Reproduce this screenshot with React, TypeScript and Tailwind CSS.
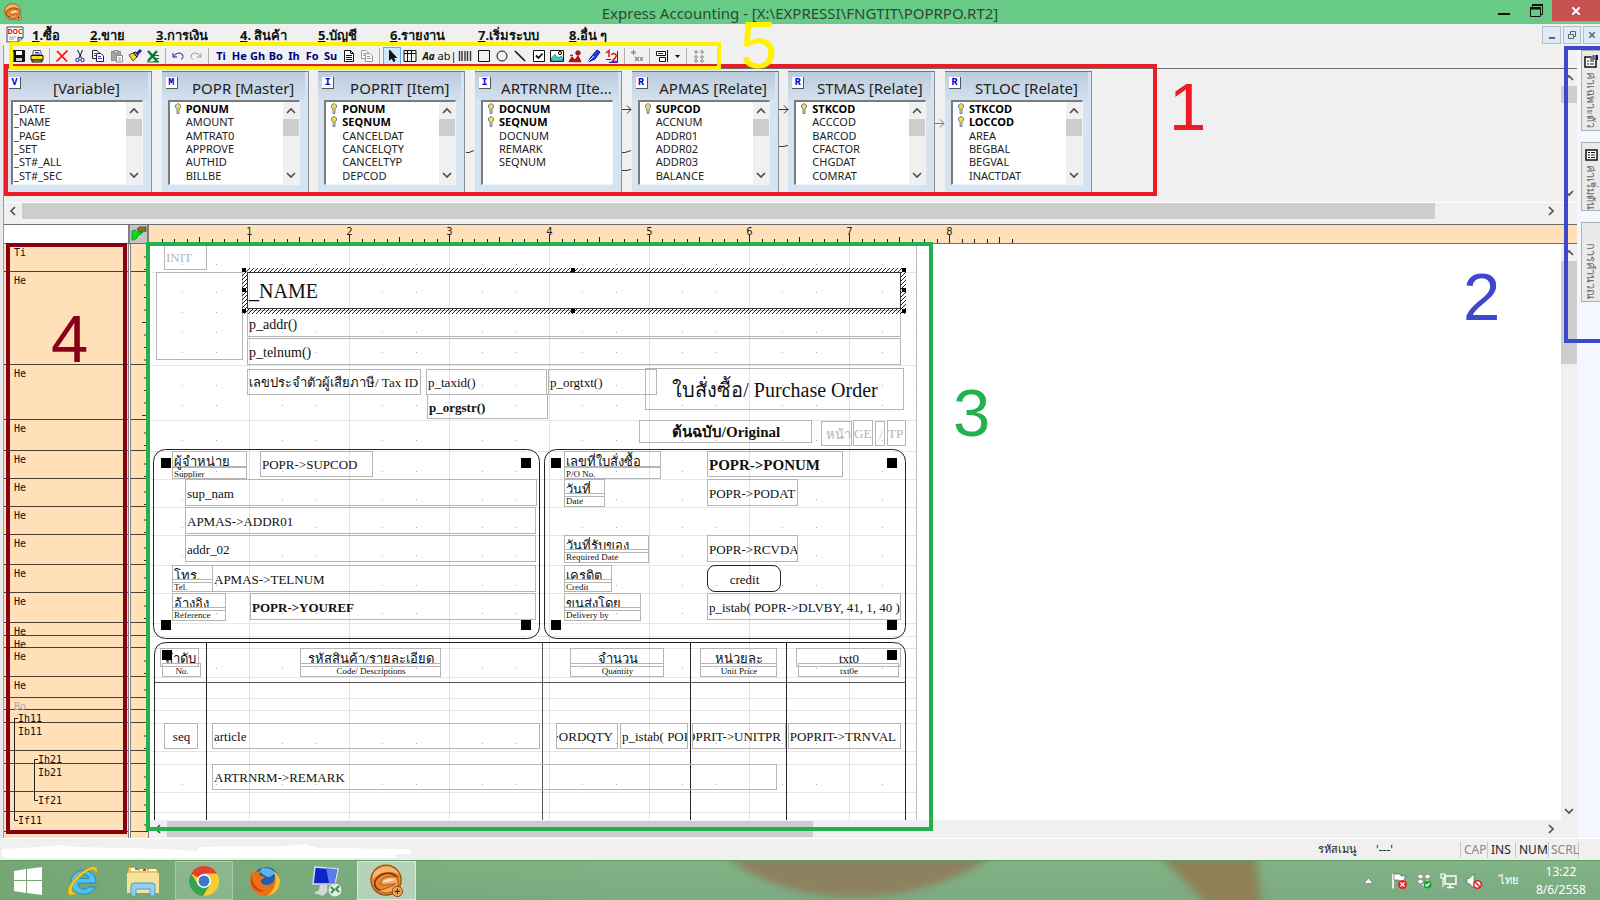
import type { ReactNode } from 'react';
import clsx from 'clsx';

interface FieldWindow {
  badge: string;
  title: string;
  keys: string[];
  fields: string[];
  scroll: boolean;
}

interface ReportField {
  x: number;
  y: number;
  w: number;
  h: number;
  text: string;
  className?: string;
}

const menus = [
  { key: '1', label: '.ซื้อ', width: 'w-[58px]' },
  { key: '2', label: '.ขาย', width: 'w-[66px]' },
  { key: '3', label: '.การเงิน', width: 'w-[84px]' },
  { key: '4', label: '. สินค้า', width: 'w-[78px]' },
  { key: '5', label: '.บัญชี', width: 'w-[72px]' },
  { key: '6', label: '.รายงาน', width: 'w-[88px]' },
  { key: '7', label: '.เริ่มระบบ', width: 'w-[91px]' },
  { key: '8', label: '.อื่น ๆ', width: 'w-[60px]' },
];

const fieldWindows: FieldWindow[] = [
  { badge: 'V', title: '[Variable]', keys: [], fields: ['_DATE', '_NAME', '_PAGE', '_SET', '_ST#_ALL', '_ST#_SEC'], scroll: true },
  { badge: 'M', title: 'POPR [Master]', keys: ['PONUM'], fields: ['AMOUNT', 'AMTRAT0', 'APPROVE', 'AUTHID', 'BILLBE'], scroll: true },
  { badge: 'I', title: 'POPRIT [Item]', keys: ['PONUM', 'SEQNUM'], fields: ['CANCELDAT', 'CANCELQTY', 'CANCELTYP', 'DEPCOD'], scroll: true },
  { badge: 'I', title: 'ARTRNRM [Ite...', keys: ['DOCNUM', 'SEQNUM'], fields: ['DOCNUM', 'REMARK', 'SEQNUM'], scroll: false },
  { badge: 'R', title: 'APMAS [Relate]', keys: ['SUPCOD'], fields: ['ACCNUM', 'ADDR01', 'ADDR02', 'ADDR03', 'BALANCE'], scroll: true },
  { badge: 'R', title: 'STMAS [Relate]', keys: ['STKCOD'], fields: ['ACCCOD', 'BARCOD', 'CFACTOR', 'CHGDAT', 'COMRAT'], scroll: true },
  { badge: 'R', title: 'STLOC [Relate]', keys: ['STKCOD', 'LOCCOD'], fields: ['AREA', 'BEGBAL', 'BEGVAL', 'INACTDAT'], scroll: true },
];

// Report sections, heights are in screen pixels
const sections = [
  { name: 'Ti', h: 28 },
  { name: 'He', h: 93 },
  { name: 'He', h: 55 },
  { name: 'He', h: 31 },
  { name: 'He', h: 28 },
  { name: 'He', h: 28 },
  { name: 'He', h: 28 },
  { name: 'He', h: 30 },
  { name: 'He', h: 28 },
  { name: 'He', h: 30 },
  { name: 'He', h: 13 },
  { name: 'He', h: 12 },
  { name: 'He', h: 29 },
  { name: 'He', h: 21 },
  { name: 'Bo', h: 12, className: 'text-[#a9a9a9]' },
  { name: 'Ih11', h: 13, className: 'pl-[14px]' },
  { name: 'Ib11', h: 28, className: 'pl-[14px]' },
  { name: 'Ih21', h: 13, className: 'pl-[34px]' },
  { name: 'Ib21', h: 28, className: 'pl-[34px]' },
  { name: 'If21', h: 20, className: 'pl-[34px]' },
  { name: 'If11', h: 20, className: 'pl-[14px]' },
];

const thaiLabel = 'items-start !overflow-visible text-[13px] leading-[15px]';
const engLabel = 'text-[9px] leading-[10px]';
const mid = 'justify-center';

const reportFields: ReportField[] = [
  { x: 15, y: 0, w: 43, h: 26, text: 'INIT', className: 'text-[#b4b4b4]' },
  { x: 7, y: 28, w: 87, h: 88, text: '' },
  { x: 98, y: 66, w: 654, h: 27, text: 'p_addr()', className: 'text-sm' },
  { x: 98, y: 94, w: 654, h: 27, text: 'p_telnum()', className: 'text-sm' },
  { x: 98, y: 125, w: 174, h: 26, text: 'เลขประจำตัวผู้เสียภาษี/ Tax ID' },
  { x: 277, y: 125, w: 121, h: 26, text: 'p_taxid()' },
  { x: 278, y: 150, w: 121, h: 25, text: 'p_orgstr()', className: 'font-bold' },
  { x: 399, y: 125, w: 109, h: 26, text: 'p_orgtxt()' },
  { x: 496, y: 124, w: 259, h: 42, text: 'ใบสั่งซื้อ/ Purchase Order', className: 'justify-center text-xl' },
  { x: 490, y: 176, w: 173, h: 23, text: 'ต้นฉบับ/Original', className: 'justify-center text-[15px] font-bold' },
  { x: 672, y: 177, w: 31, h: 25, text: 'หน้า', className: '!pl-[4px] text-[#b4b4b4]' },
  { x: 704, y: 176, w: 20, h: 26, text: 'GE', className: '!pl-0 text-[#b4b4b4]' },
  { x: 726, y: 177, w: 10, h: 25, text: '/', className: '!pl-[3px] text-[#b4b4b4]' },
  { x: 738, y: 176, w: 19, h: 26, text: 'TP', className: '!pl-0 text-[#b4b4b4]' },

  { x: 23, y: 207, w: 75, h: 17, text: 'ผู้จำหน่าย', className: thaiLabel },
  { x: 23, y: 222, w: 75, h: 13, text: 'Supplier', className: engLabel },
  { x: 111, y: 207, w: 113, h: 26, text: 'POPR->SUPCOD' },
  { x: 36, y: 235, w: 352, h: 27, text: 'sup_nam' },
  { x: 36, y: 263, w: 351, h: 27, text: 'APMAS->ADDR01' },
  { x: 36, y: 291, w: 351, h: 27, text: 'addr_02' },
  { x: 23, y: 321, w: 41, h: 18, text: 'โทร.', className: thaiLabel },
  { x: 23, y: 335, w: 41, h: 13, text: 'Tel.', className: engLabel },
  { x: 63, y: 321, w: 324, h: 27, text: 'APMAS->TELNUM' },
  { x: 23, y: 349, w: 54, h: 18, text: 'อ้างอิง', className: thaiLabel },
  { x: 23, y: 363, w: 54, h: 14, text: 'Reference', className: engLabel },
  { x: 101, y: 349, w: 286, h: 27, text: 'POPR->YOUREF', className: 'font-bold' },

  { x: 415, y: 207, w: 97, h: 17, text: 'เลขที่ใบสั่งซื้อ', className: thaiLabel },
  { x: 415, y: 222, w: 97, h: 13, text: 'P/O No.', className: engLabel },
  { x: 558, y: 207, w: 136, h: 26, text: 'POPR->PONUM', className: 'text-[15px] font-bold' },
  { x: 415, y: 235, w: 41, h: 18, text: 'วันที่', className: thaiLabel },
  { x: 415, y: 249, w: 41, h: 14, text: 'Date', className: engLabel },
  { x: 558, y: 235, w: 91, h: 27, text: 'POPR->PODAT' },
  { x: 415, y: 291, w: 85, h: 18, text: 'วันที่รับของ', className: thaiLabel },
  { x: 415, y: 305, w: 85, h: 14, text: 'Required Date', className: engLabel },
  { x: 558, y: 291, w: 91, h: 27, text: 'POPR->RCVDAT' },
  { x: 415, y: 321, w: 48, h: 18, text: 'เครดิต', className: thaiLabel },
  { x: 415, y: 335, w: 48, h: 13, text: 'Credit', className: engLabel },
  { x: 558, y: 321, w: 74, h: 27, text: 'credit', className: 'justify-center rounded-lg !border-[#222]' },
  { x: 415, y: 349, w: 77, h: 18, text: 'ขนส่งโดย', className: thaiLabel },
  { x: 415, y: 363, w: 77, h: 14, text: 'Delivery by', className: engLabel },
  { x: 558, y: 349, w: 194, h: 27, text: 'p_istab( POPR->DLVBY, 41, 1, 40 )' },

  { x: 11, y: 404, w: 39, h: 19, text: 'ลำดับ', className: clsx(thaiLabel, mid) },
  { x: 13, y: 419, w: 39, h: 14, text: 'No.', className: clsx(engLabel, mid) },
  { x: 151, y: 404, w: 141, h: 19, text: 'รหัสสินค้า/รายละเอียด', className: clsx(thaiLabel, mid) },
  { x: 151, y: 419, w: 141, h: 14, text: 'Code/ Descriptions', className: clsx(engLabel, mid) },
  { x: 421, y: 404, w: 94, h: 19, text: 'จำนวน', className: clsx(thaiLabel, mid) },
  { x: 421, y: 419, w: 94, h: 14, text: 'Quantity', className: clsx(engLabel, mid) },
  { x: 551, y: 404, w: 77, h: 19, text: 'หน่วยละ', className: clsx(thaiLabel, mid) },
  { x: 551, y: 419, w: 77, h: 14, text: 'Unit Price', className: clsx(engLabel, mid) },
  { x: 647, y: 404, w: 105, h: 19, text: 'txt0', className: clsx(thaiLabel, mid) },
  { x: 649, y: 419, w: 101, h: 14, text: 'txt0e', className: clsx(engLabel, mid) },

  { x: 15, y: 479, w: 34, h: 26, text: 'seq', className: mid },
  { x: 63, y: 479, w: 328, h: 26, text: 'article' },
  { x: 407, y: 479, w: 62, h: 26, text: 'POPRIT->ORDQTY', className: 'justify-end pr-[4px]' },
  { x: 471, y: 479, w: 68, h: 26, text: 'p_istab( POPRIT->TQUCOD' },
  { x: 543, y: 479, w: 94, h: 26, text: 'POPRIT->UNITPR', className: 'justify-end pr-[4px]' },
  { x: 639, y: 479, w: 113, h: 26, text: 'POPRIT->TRNVAL', className: 'justify-end pr-[4px]' },
  { x: 63, y: 520, w: 565, h: 26, text: 'ARTRNRM->REMARK' },
];

const panelHandles = [
  [12, 214], [372, 214], [12, 376], [372, 376],
  [402, 214], [738, 214], [402, 376], [738, 376],
  [13, 406], [738, 406],
];

function Chevron({ dir }: { dir: 'up' | 'down' | 'left' | 'right' }) {
  const paths = { up: 'M1 7L5 3L9 7', down: 'M1 3L5 7L9 3', left: 'M7 1L3 5L7 9', right: 'M3 1L7 5L3 9' };
  return (
    <svg viewBox="0 0 10 10" className="size-[10px]">
      <path d={paths[dir]} fill="none" stroke="#505050" strokeWidth="1.7" />
    </svg>
  );
}

function VScroll({ thumb, className }: { thumb: string; className?: string }) {
  return (
    <div className={clsx('flex w-4 shrink-0 flex-col bg-[#f0f0f0]', className)}>
      <button aria-label="Scroll up" className="flex h-[17px] items-center justify-center"><Chevron dir="up" /></button>
      <div className="flex-1"><div className={clsx('bg-[#cdcdcd]', thumb)} /></div>
      <button aria-label="Scroll down" className="flex h-[18px] items-center justify-center"><Chevron dir="down" /></button>
    </div>
  );
}

function HScroll({ thumb }: { thumb: string }) {
  return (
    <div className="flex h-4 min-w-0 flex-1 bg-[#f0f0f0]">
      <button aria-label="Scroll left" className="flex w-[18px] items-center justify-center"><Chevron dir="left" /></button>
      <div className="flex-1"><div className={clsx('h-full bg-[#cdcdcd]', thumb)} /></div>
      <button aria-label="Scroll right" className="flex w-5 items-center justify-center"><Chevron dir="right" /></button>
    </div>
  );
}

function ExpressIcon({ className }: { className: string }) {
  return (
    <svg viewBox="0 0 36 36" className={className}>
      <circle cx="17" cy="17" r="16" fill="#e9862b" stroke="#8a4a12" strokeWidth="1.2" />
      <path d="M3 12C8 0 26 0 31 11C22 6 11 8 3 16Z" fill="#f8b470" />
      <path d="M29 14C22 7 9 9 5 19C4 23 7 27 11 28" fill="none" stroke="#6b2f08" strokeWidth="1.5" />
      <path d="M29 14C20 12 12 14 11 21C15 24 22 21 27 21C22 25 15 26 10 28C15 33 26 31 30 23Z" fill="#f6a65a" stroke="#8a4411" strokeWidth=".8" />
      <path d="M13 19C17 15 23 15 27 17C22 18 18 20 13 19Z" fill="#fde0bd" />
      <circle cx="29" cy="29" r="5.5" fill="#f2a455" stroke="#7a3d0c" />
      <path d="M29 26V32M26 29H32" stroke="#5b2a08" strokeWidth="1.2" />
    </svg>
  );
}

function Tool({ label, active, children }: { label: string; active?: boolean; children: ReactNode }) {
  return (
    <button
      aria-label={label}
      className={clsx('flex h-[18px] w-[18px] items-center justify-center', active && 'border border-[#66a7e8] bg-[#cce8ff]')}
    >
      {children}
    </button>
  );
}

function Icon({ children }: { children: ReactNode }) {
  return <svg viewBox="0 0 14 14" className="size-[14px] shrink-0" fill="none" stroke="#111" strokeWidth="1">{children}</svg>;
}

function PageLines({ color }: { color: string }) {
  return (
    <g stroke={color}>
      <path d="M2.5 1.5H8.5L11.5 4.5V12.5H2.5Z" fill="#fff" />
      <path d="M8.5 1.5V4.5H11.5M4 6.5H10M4 8.5H10M4 10.5H10" />
    </g>
  );
}

function CopyPages({ ink, line }: { ink: string; line: string }) {
  return (
    <g stroke={ink}>
      <path d="M1.5 1.5H6L8.5 4V9.5H1.5Z" fill="#fff" />
      <path d="M5.5 4.5H10L12.5 7V12.5H5.5Z" fill="#fff" />
      <path d="M3 4.5H5M3 6.5H5M7 7.5H10M7 9.5H11" stroke={line} />
    </g>
  );
}

function Separator() {
  return <div className="mx-[3px] h-4 w-px shrink-0 bg-[#b0b0b0]" />;
}

function Toolbar() {
  return (
    <div className="flex h-[23px] shrink-0 items-center bg-[#f1f1f1] pb-px pl-[6px]">
      <div className="flex w-9 justify-between">
        <Tool label="Save">
          <Icon>
            <path d="M1.5 1.5H12.5V12.5H1.5Z" fill="#111" />
            <path d="M4 2H10V6H4Z" fill="#fff" stroke="none" />
            <path d="M4 9H10V12H4Z" fill="#cfcfcf" stroke="none" />
            <path d="M1.5 3V12" stroke="#8a8a00" />
          </Icon>
        </Tool>
        <Tool label="Print">
          <Icon>
            <path d="M3.5 1.5H10.5L11.5 6H2.5Z" fill="#fff" stroke="#555" />
            <path d="M5 3.5H9M5 5H10" stroke="#44c" />
            <path d="M1 6.5H13V11H1Z" fill="#f3df1a" />
            <path d="M2 11H12V13H2Z" fill="#e8c800" />
          </Icon>
        </Tool>
      </div>
      <Separator />
      <div className="flex w-[109px] justify-between">
        <Tool label="Delete"><Icon><path d="M2 2L12 12.5M12.5 1.5L1.5 12.5" stroke="#f00" strokeWidth="1.6" /></Icon></Tool>
        <Tool label="Cut">
          <Icon>
            <path d="M4.5 1L8.5 9M9.5 1L6 9" />
            <circle cx="4.5" cy="11" r="1.7" stroke="#11a" />
            <circle cx="9.5" cy="11" r="1.7" stroke="#11a" />
          </Icon>
        </Tool>
        <Tool label="Copy"><Icon><CopyPages ink="#223" line="#33c" /></Icon></Tool>
        <Tool label="Paste">
          <Icon>
            <path d="M1.5 2.5H10.5V11.5H1.5Z" fill="#a5a5a5" stroke="#888" />
            <path d="M4 1.5H8V4H4Z" fill="#ddd" stroke="#888" />
            <path d="M6.5 6.5H12.5V13H6.5Z" fill="#fff" stroke="#888" />
            <path d="M8 9H11M8 11H11" stroke="#999" />
          </Icon>
        </Tool>
        <Tool label="Format brush">
          <Icon>
            <path d="M1 6L5 4L9 8L5 12Z" fill="#f5e11c" stroke="#553" />
            <path d="M5 4L8 3L10 6L9 8Z" fill="#999" />
            <path d="M9 5L13 1" stroke="#22a" strokeWidth="3" />
          </Icon>
        </Tool>
        <Tool label="Export">
          <Icon>
            <path d="M2 2L11 12M11 2L2 12" stroke="#0a7a2a" strokeWidth="2.5" />
            <path d="M8 6.5H13M8 9.5H13M8 12.5H13M1 13H13" stroke="#0a7a2a" />
          </Icon>
        </Tool>
      </div>
      <Separator />
      <div className="flex w-9 justify-between">
        <Tool label="Undo"><Icon><path d="M2 4V8H6M2.5 7.5C5 3 12 3 12 7.5C12 9 11 10 10 10.5" stroke="#118" /></Icon></Tool>
        <Tool label="Redo"><Icon><path d="M12 4V8H8M11.5 7.5C9 3 2 3 2 7.5C2 9 3 10 4 10.5" stroke="#999" /></Icon></Tool>
      </div>
      <Separator />
      <div className="flex w-[164px] justify-between text-[11px] font-bold text-[#00007b]">
        {['Ti', 'He', 'Gh', 'Bo', 'Ih', 'Fo', 'Su'].map((name) => (
          <Tool key={name} label={`Section ${name}`}>{name}</Tool>
        ))}
        <Tool label="Page"><Icon><PageLines color="#111" /></Icon></Tool>
        <Tool label="Pages"><Icon><CopyPages ink="#999" line="#999" /></Icon></Tool>
      </div>
      <Separator />
      <div className="flex w-[238px] justify-between">
        <Tool label="Pointer" active><Icon><path d="M4.5 1V11L7 9L8.5 12.5L10 12L8.5 8.5H11.5Z" fill="#111" /></Icon></Tool>
        <Tool label="Grid"><Icon><path d="M1 1.5H13V12.5H1ZM4.5 1.5V12.5M8.5 1.5V12.5M1 4.5H13" /></Icon></Tool>
        <Tool label="Text"><span className="text-[10px] font-bold italic">Aa</span></Tool>
        <Tool label="Edit box"><span className="text-[11px]">ab|</span></Tool>
        <Tool label="Barcode"><Icon><path d="M1.5 2V12M4 2V12M7 2V12M9.5 2V12M12.5 2V12" stroke="#333" strokeWidth="1.4" /></Icon></Tool>
        <Tool label="Rectangle"><Icon><path d="M1.5 1.5H12.5V12.5H1.5Z" /></Icon></Tool>
        <Tool label="Ellipse"><Icon><circle cx="7" cy="7" r="5" /></Icon></Tool>
        <Tool label="Line"><Icon><path d="M2 2L12 12" strokeWidth="1.6" /></Icon></Tool>
        <Tool label="Check box"><Icon><path d="M1.5 1.5H12.5V12.5H1.5Z" fill="#fff" /><path d="M4 6.5L6.5 9L10.5 4.5" strokeWidth="1.8" /></Icon></Tool>
        <Tool label="Picture">
          <Icon>
            <path d="M.5 1.5H13.5V12.5H.5Z" fill="#fff" />
            <path d="M1.500 9L5 5.500L8 9L11 7L12.500 9V12H1.500Z" fill="#3fd0cc" stroke="#167" strokeWidth=".7" />
            <circle cx="10" cy="4" r="1.6" fill="#f5e11c" />
          </Icon>
        </Tool>
        <Tool label="Field picture">
          <Icon>
            <path d="M1 12.5L4 8L7 11L10 7L13 12.5Z" fill="#b91414" stroke="#811" />
            <circle cx="10" cy="4" r="2.2" fill="#c11" stroke="#811" />
            <path d="M2 6.5H5M1 12.5H13" stroke="#b11" strokeWidth="1.5" />
          </Icon>
        </Tool>
        <Tool label="Pen"><Icon><path d="M1 13L4 8L10 1L13 3L8 10Z" fill="#1f3fe0" stroke="#118" /><path d="M1 13L7 7" stroke="#fff" /></Icon></Tool>
        <Tool label="Number">
          <Icon>
            <path d="M1 4L4 1.5V8M6.5 6C8 3 13 5 10.5 8.5L7 12.5H12" stroke="#e01515" strokeWidth="1.5" />
            <path d="M1 10.5H6M12.5 2V13.5H4" stroke="#22c" />
          </Icon>
        </Tool>
      </div>
      <Separator />
      <Tool label="Formula"><Icon><path d="M1 3.5H6M3.5 1V6M5 8L9 12M9 8L5 12M10 9H13M10 11H13" stroke="#888" strokeWidth="1.3" /></Icon></Tool>
      <Separator />
      <Tool label="Align"><Icon><path d="M1.5 2.5H10.5V6.5H1.5ZM4.5 8.5H10.5V12.5H4.5ZM12.5 1V13" fill="#fff" /><path d="M3 4.5H8" stroke="#22c" /></Icon></Tool>
      <button aria-label="Align options" className="flex w-3 justify-center"><Icon><path d="M5 6H10L7.500 9Z" fill="#111" stroke="none" /></Icon></button>
      <Separator />
      <Tool label="Order">
        <Icon>
          <path d="M2 3H6M4 1V5" stroke="#888" />
          {[[10, 3], [4, 8], [10, 8], [4, 12], [10, 12]].map(([x, y]) => <circle key={`${x}${y}`} cx={x} cy={y} r="1.3" stroke="#888" />)}
        </Icon>
      </Tool>
    </div>
  );
}

function KeyIcon() {
  return (
    <svg viewBox="0 0 6 11" className="h-[11px] w-[6px]">
      <path d="M3 .5L5.500 2V4.500L4 5.500V10.500H2V5.500L.5 4.500V2Z" fill="#f3e23a" stroke="#5560b8" strokeWidth=".8" />
    </svg>
  );
}

function TableWindow({ win }: { win: FieldWindow }) {
  return (
    <section className="flex h-[122px] w-[147px] flex-col border-t border-r border-t-[#707880] border-r-[#8a8f96] bg-[#d6e3f1] pr-[3px]">
      <header className="flex h-7 shrink-0 bg-linear-to-b from-[#bccbdc] to-[#d3e0ee] pl-[4px]">
        <span className="mt-[5px] flex size-[12px] shrink-0 items-center justify-center border-r border-b border-[#555] bg-white font-['Liberation_Mono',monospace] text-[10px] leading-none font-bold text-[#0000e0]">
          {win.badge}
        </span>
        <h2 className="ml-[10px] flex-1 pt-[6px] pr-[6px] text-center text-[15px] leading-5 whitespace-nowrap text-[#222]">{win.title}</h2>
      </header>
      <div className="mr-[5px] ml-[6px] flex h-[85px] border border-t-2 border-l-2 border-t-[#7b7b7b] border-r-[#eef3f8] border-b-[#eef3f8] border-l-[#7b7b7b] bg-white">
        <ul className="grid h-20 flex-1 grid-rows-6 pl-px text-[11px] leading-[13px] text-[#222]">
          {win.keys.map((name) => (
            <li key={`key-${name}`} className="flex items-center font-bold text-black">
              <span className="flex w-[15px] justify-end pr-[5px]"><KeyIcon /></span>
              {name}
            </li>
          ))}
          {win.fields.map((name) => (
            <li key={name} className={clsx('flex items-center', win.badge !== 'V' && 'pl-[15px]')}>{name}</li>
          ))}
        </ul>
        {win.scroll && <VScroll thumb="h-[17px]" />}
      </div>
    </section>
  );
}

function RelationLines() {
  return (
    <svg className="absolute top-0 left-0 h-[124px] w-full" fill="none" stroke="#333">
      <path d="M462 83.500H465L470 81.500M618 83.500H621L627 81.500M618 101.500H622L627 100.500M775 77.500H779L784 76.500" />
      <path d="M618 40.500H627M623 36.500L627 40.500L623 44.500M775 40.500H784M780 36.500L784 40.500L780 44.500" />
      <path d="M931 54.500H940M936 50.500L940 54.500L936 58.500" stroke="#777" />
    </svg>
  );
}

function Ruler() {
  const ticks = Array.from({ length: 69 }, (_, i) => i + 1);
  return (
    <svg className="h-full w-full font-['DejaVu_Sans',sans-serif] text-[10px]">
      {ticks.map((i) => {
        const len = i % 8 === 0 ? 9 : i % 4 === 0 ? 6 : 4;
        const x = Math.round(i * 12.5);
        return <rect key={i} x={x} y={18 - len} width="1" height={len} fill="#222" />;
      })}
      {ticks.filter((i) => i % 8 === 0).map((i) => (
        <text key={i} x={i * 12.5 + 0.5} y="10" textAnchor="middle" fill="#222">{i / 8}</text>
      ))}
    </svg>
  );
}

function SectionRuler() {
  return (
    <div className="flex w-[17px] shrink-0 flex-col overflow-hidden bg-[#ffe0b9]">
      {sections.map((s, i) => (
        <svg key={i} className="w-full shrink-0 border-b border-[#4a4034]" style={{ height: s.h }}>
          {Array.from({ length: Math.floor((s.h - 3) / 12.5) }, (_, k) => (
            <rect key={k} x={k === 3 ? 11 : 13} y={(k + 1) * 12.5} width="6" height="1" fill="#333" />
          ))}
        </svg>
      ))}
    </div>
  );
}

function ReportGrid() {
  let top = 0;
  const rows = sections.map((s) => {
    const row = { top, h: s.h };
    top += s.h;
    return row;
  });
  const dotColumns = Array.from({ length: 23 }, (_, i) => i + 1).filter((i) => i % 3 !== 0);
  return (
    <svg className="absolute inset-0 h-full w-full">
      {[1, 2, 3, 4, 5, 6, 7].map((i) => <path key={i} d={`M${i * 100 + 0.5} 0V577`} stroke="#e2e2e2" />)}
      <path d="M767.500 0V577" stroke="#bdbdbd" />
      {rows.slice(1).map((r) => <path key={r.top} d={`M2 ${r.top + 0.5}H767`} stroke="#e6e6e6" />)}
      {rows.map((r) => Array.from({ length: Math.min(4, Math.floor((r.h - 4) / 20)) }, (_, k) => (
        <g key={`${r.top}-${k}`} fill="#aaa">
          {dotColumns.map((c) => <rect key={c} x={Math.round(c * 33.33)} y={r.top + (k + 1) * 20} width="1" height="1" />)}
        </g>
      )))}
      {/* item table frame */}
      <g fill="none" stroke="#222">
        <path d="M5.500 577V411Q5.500 398.500 18 398.500H744Q756.500 398.500 756.500 411V577" />
        <path d="M6 438.500H757" stroke="#555" />
        <path d="M57.500 399V577M541.500 399V577M637.500 399V577" />
        <path d="M393.500 399V577" stroke="#555" />
      </g>
      <rect x="4.5" y="205.500" width="386" height="189" rx="12" fill="none" stroke="#222" />
      <rect x="395.500" y="205.500" width="361" height="189" rx="12" fill="none" stroke="#222" />
    </svg>
  );
}

function SelectedField() {
  return (
    <div className="absolute top-6 left-[93px] h-[46px] w-[664px]">
      <svg className="absolute inset-0 h-full w-full">
        <defs>
          <pattern id="hatch" width="4" height="4" patternUnits="userSpaceOnUse">
            <path d="M-1 1L1 -1M0 4L4 0M3 5L5 3" stroke="#222" strokeWidth="1" />
          </pattern>
        </defs>
        <path d="M0 0H664V46H0ZM5 5V40H659V5Z" fill="url(#hatch)" fillRule="evenodd" />
        <rect x="5.500" y="4.500" width="653" height="36" fill="none" stroke="#333" />
        {[0, 329, 660].map((x) => [0, 41].map((y) => <rect key={`${x}-${y}`} x={x} y={y} width="4" height="4" />))}
        <rect x="0" y="20" width="4" height="4" />
        <rect x="660" y="20" width="4" height="4" />
      </svg>
      <span className="absolute top-[11px] left-[7px] text-xl leading-6">_NAME</span>
    </div>
  );
}

function ReportCanvas() {
  return (
    <div className="relative min-h-0 flex-1 overflow-hidden bg-white font-['Liberation_Serif','Norasi',serif] text-[13px] text-[#111]">
      <ReportGrid />
      {reportFields.map((f, i) => (
        <div
          key={i}
          className={clsx('absolute flex items-center overflow-hidden border border-[#b5b5b5] pt-[2px] pl-px whitespace-nowrap', f.className)}
          style={{ left: f.x, top: f.y, width: f.w, height: f.h }}
        >
          {f.text}
        </div>
      ))}
      {panelHandles.map(([x, y]) => (
        <div key={`${x}-${y}`} className="absolute size-[10px] bg-black" style={{ left: x, top: y }} />
      ))}
      <SelectedField />
    </div>
  );
}

function SideTabs() {
  return (
    <aside className="flex w-[23px] shrink-0 flex-col items-end bg-[#f4f7fd] pt-[5px] text-[11px] text-[#666]">
      <button className="flex h-[81px] w-[19px] flex-col items-center gap-1 border border-r-0 border-[#a9b0b8] bg-[#eaeaea] pt-[4px]">
        <svg viewBox="0 0 14 13" className="h-[13px] w-[14px] shrink-0">
          <path d="M1 2H12V12H1Z" fill="#fff" stroke="#111" strokeWidth="1.5" />
          <path d="M3 6H5M6 6H10M3 9H5M6 9H10" stroke="#111" strokeWidth="1.2" />
          <path d="M5 3L9 0H14V5H7Z" fill="#777" />
          <path d="M12 0H14V5H12Z" fill="#0a0a90" />
        </svg>
        <span className="[writing-mode:vertical-rl]">ค่าเฉพาะตัว</span>
      </button>
      <button className="mt-[11px] flex h-[69px] w-[19px] flex-col items-center gap-1 border border-r-0 border-[#a9b0b8] bg-[#eaeaea] pt-[6px]">
        <svg viewBox="0 0 13 12" className="h-3 w-[13px] shrink-0">
          <path d="M1 1H12V11H1Z" fill="#fff" stroke="#111" strokeWidth="1.5" />
          <path d="M3 3.500H5M6 3.500H10M3 6H5M6 6H10M3 8.500H5M6 8.500H10" stroke="#111" />
        </svg>
        <span className="[writing-mode:vertical-rl]">ค่าเริ่มต้น</span>
      </button>
      <button className="mt-[11px] flex h-[80px] w-[19px] flex-col items-center border border-r-0 border-[#a9b0b8] bg-[#eaeaea] pt-[20px]">
        <span className="[writing-mode:vertical-rl]">การคำนวณ</span>
      </button>
    </aside>
  );
}

function StatusBar() {
  return (
    <footer className="relative flex h-[22px] shrink-0 items-center justify-end border-t border-white bg-[#f0f0f0] pr-[21px] text-xs text-[#222]">
      <svg className="absolute top-1 left-0 h-4 w-[412px]" viewBox="0 0 412 16">
        <path d="M2 6L40 4L60 2L76 4L165 6L198 8V4L290 3L305 1L318 5L411 6V11H396V15H10L2 13Z" fill="#fff" />
      </svg>
      <span className="mr-[19px] text-[11px]">รหัสเมนู</span>
      <span className="mr-[67px]">'---'</span>
      <span className="w-[27px] border-l border-[#c8c8c8] pl-[3px] text-[#888]">CAP</span>
      <span className="w-7 border-l border-[#c8c8c8] pl-[3px]">INS</span>
      <span className="w-[33px] border-l border-[#c8c8c8] pl-[3px]">NUM</span>
      <span className="w-[31px] border-x border-[#c8c8c8] pl-[2px] text-[#888]">SCRL</span>
    </footer>
  );
}

function Taskbar() {
  return (
    <div className="relative flex h-10 shrink-0 items-center overflow-hidden border-t border-[#5f9a63] bg-linear-to-b from-[#80b384] to-[#7caa83]">
      <svg className="absolute inset-0 h-full w-full" viewBox="0 0 1600 40" preserveAspectRatio="none">
        <defs>
          <filter id="soft" x="-10%" y="-50%" width="120%" height="200%"><feGaussianBlur stdDeviation="5 4" /></filter>
          <linearGradient id="shade">
            <stop offset="0" stopColor="#74a774" />
            <stop offset="1" stopColor="#74a774" stopOpacity="0" />
          </linearGradient>
        </defs>
        <rect width="620" height="40" fill="url(#shade)" />
        <path d="M715 -14C780 52 920 56 1005 -14Z" fill="#8e8160" filter="url(#soft)" />
        <path d="M1155 -10L1212 50H1262L1255 -10Z" fill="#8f8056" filter="url(#soft)" />
      </svg>
      <nav className="relative flex h-full items-center">
        <button aria-label="Start" className="flex w-[55px] justify-center">
          <svg viewBox="0 0 28 28" className="size-7" fill="#fff"><path d="M0 4L12 2V13H0ZM13 2L28 0V13H13ZM0 14H12V26L0 24ZM13 14H28V28L13 26Z" /></svg>
        </button>
        <button aria-label="Internet Explorer" className="flex w-[56px] justify-center">
          <svg viewBox="0 0 32 32" className="size-8">
            <path d="M29 18H11C11 25 19 26 21 22H28.500C24 33 4 31 4 17C4 2 29 1 29 18ZM11.500 13.500H22C21 8 13 8 11.500 13.500Z" fill="#4cc3f5" stroke="#1a7fc4" strokeWidth=".8" />
            <path d="M29 9C32 3 29 0 22 3C10 8 1 20 1 27C1 31 5 31 10 28C2 29 4 21 12 13C20 5 29 1 29 9Z" fill="#f5c915" stroke="#c79a08" strokeWidth=".5" />
          </svg>
        </button>
        <button aria-label="File Explorer" className="flex w-[64px] justify-center">
          <svg viewBox="0 0 34 32" className="h-8 w-[34px]">
            <path d="M2 2H9L11 4H32V28H2Z" fill="#e9c763" stroke="#b98f2d" />
            <path d="M5 3H12V6H5ZM14 4H21V6H14ZM23 4H30V6H23Z" fill="#fff" />
            <path d="M9 3H12V5H9Z" fill="#2a8" /><path d="M17 4H20V6H17Z" fill="#d33" />
            <path d="M1 8H33V28H1Z" fill="#f6e09a" />
            <path d="M5 31V21Q5 18 8 18H26Q29 18 29 21V31H24V24H10V31Z" fill="#8fd0ef" stroke="#4b9ccb" />
          </svg>
        </button>
        <button aria-label="Chrome" className="flex h-full w-[58px] items-center justify-center border border-[#a9cbab] bg-white/15">
          <svg viewBox="0 0 30 30" className="size-[30px]">
            <circle cx="15" cy="15" r="15" fill="#f8cf2c" />
            <path d="M15 15L2 7.500A15 15 0 0 1 28 7.500H15Z" fill="#dd4232" />
            <path d="M2 7.500A15 15 0 0 0 14 30L21 18.500L9 18.500Z" fill="#35a350" />
            <circle cx="15" cy="15" r="7" fill="#fff" /><circle cx="15" cy="15" r="5.500" fill="#3b78c8" />
          </svg>
        </button>
        <button aria-label="Firefox" className="flex w-[64px] justify-center">
          <svg viewBox="0 0 30 30" className="size-[30px]">
            <circle cx="16" cy="14" r="13" fill="#1f5fae" />
            <path d="M12 2C17 1 23 3 26 8C22 8 21 12 17 11C15 9 11 8 10 5Z" fill="#5bb4e8" />
            <path d="M3 3C3 6 4 7 5 7C7 5 10 5 11 6C9 7 9 9 11 10L15 11C14 13 11 13 11 15C11 19 17 20 21 18C25 16 26 10 24 5C28 8 30 12 30 16C29 25 22 30 15 30C7 30 0 24 0 15C0 10 1 6 3 3Z" fill="#e8711a" />
            <path d="M24 5C28 8 30 12 30 16C29 24 23 29 17 30C24 25 28 17 24 5Z" fill="#f8c52c" />
            <path d="M2 10C2 18 7 24 14 25C8 27 1 22 1 14Z" fill="#c9400f" />
          </svg>
        </button>
        <button aria-label="Remote Desktop" className="flex w-[60px] justify-center">
          <svg viewBox="0 0 32 32" className="size-8">
            <path d="M4 2L27 4L24 19L2 19Z" fill="#0f25c8" stroke="#d5dde6" strokeWidth="1.500" />
            <path d="M15 3L26 4.500L23.500 18H18Z" fill="#5c7bf0" />
            <path d="M9 20H16L17 26L12 31L3 28L8 25Z" fill="#d6d6d6" />
            <circle cx="24" cy="25" r="7" fill="#e6e9ea" stroke="#8c9399" />
            <path d="M20 22L23 25L20 28M28 21L25 24L28 27" fill="none" stroke="#1a9b2e" strokeWidth="1.800" />
          </svg>
        </button>
        <button aria-label="Express Accounting" className="flex h-full w-[59px] items-center justify-center border border-[#d8e8d9] bg-white/45"><ExpressIcon className="size-[34px]" /></button>
      </nav>
      <div className="relative ml-auto flex items-center pr-[14px] text-white">
        <button aria-label="Show hidden icons" className="mr-[18px]">
          <svg viewBox="0 0 9 6" className="h-[6px] w-[9px]"><path d="M0 5.500L4.500 0L9 5.500Z" fill="#fff" stroke="#667" strokeWidth=".6" /></svg>
        </button>
        <svg viewBox="0 0 16 16" className="mr-[9px] size-4">
          <path d="M2 1V15.500" stroke="#fff" strokeWidth="1.600" /><path d="M3 1H9L10 3H15L13 6L15 9H9L8 7H3Z" fill="#fff" stroke="#555" strokeWidth=".6" />
          <circle cx="11.500" cy="11.500" r="4.500" fill="#d92626" /><path d="M9.500 9.500L13.500 13.500M13.500 9.500L9.500 13.500" stroke="#fff" strokeWidth="1.400" />
        </svg>
        <svg viewBox="0 0 16 16" className="mr-[8px] size-4">
          <path d="M4.500 1L8 3.500L4.500 6L1 3.500ZM11.500 1L15 3.500L11.500 6L8 3.500ZM4.500 6L8 8.500L4.500 11L1 8.500ZM11.500 6L15 8.500L11.500 11L8 8.500ZM8 9.500L11 12L8 14L5 12Z" fill="#fff" stroke="#666" strokeWidth=".5" />
          <circle cx="11.500" cy="11.500" r="4" fill="#21a038" /><path d="M9.500 11.500L11 13L13.500 10" fill="none" stroke="#fff" strokeWidth="1.200" />
        </svg>
        <svg viewBox="0 0 17 16" className="mr-[9px] h-4 w-[17px]">
          <path d="M5 3H16V11H5ZM10 11V14M7 14.500H14" fill="none" stroke="#fff" strokeWidth="1.500" /><path d="M1 1H5V5H1ZM3 5V14" fill="none" stroke="#fff" strokeWidth="1.200" />
        </svg>
        <svg viewBox="0 0 16 16" className="mr-[17px] size-4">
          <path d="M1 5.500H3L8 1V15L3 10.500H1Z" fill="#fff" stroke="#555" strokeWidth=".6" />
          <circle cx="11.500" cy="11.500" r="3.800" fill="#fff" stroke="#d92626" strokeWidth="1.600" /><path d="M9 9L14 14" stroke="#d92626" strokeWidth="1.600" />
        </svg>
        <button className="mr-[18px] text-[11px]">ไทย</button>
        <time className="text-center text-xs leading-[18px]">13:22<br />8/6/2558</time>
      </div>
    </div>
  );
}

export default function App() {
  return (
    <div className="relative flex h-screen min-h-[480px] flex-col overflow-hidden bg-[#f0f0f0] font-['Noto_Sans','Tahoma',sans-serif] text-[#111]">
      <header className="relative flex h-6 shrink-0 items-center justify-center bg-[#67cb86] pt-[2px]">
        <ExpressIcon className="absolute top-[3px] left-1 size-[18px]" />
        <h1 className="text-[15px] leading-[22px] text-[#2b4a35]">Express Accounting - [X:\EXPRESSI\FNGTIT\POPRPO.RT2]</h1>
        <div className="absolute top-0 right-0 flex h-[21px]">
          <button aria-label="Minimize" className="flex w-[34px] items-end justify-center pb-[6px]"><span className="h-[2px] w-3 bg-[#111]" /></button>
          <button aria-label="Restore" className="flex w-[31px] items-center justify-center">
            <svg viewBox="0 0 13 13" className="size-[13px]"><path d="M.5 3.500H10.500V12.500H.5ZM2.500 3V.5H12.500V10.500H11" fill="none" stroke="#111" /><path d="M0 4.500H11M2 1H13" stroke="#111" strokeWidth="2" /></svg>
          </button>
          <button aria-label="Close" className="flex w-[48px] items-center justify-center bg-[#c75050]">
            <svg viewBox="0 0 8 8" className="size-2"><path d="M0 0L8 8M8 0L0 8" stroke="#fff" strokeWidth="2" /></svg>
          </button>
        </div>
      </header>

      <div className="flex h-[21px] shrink-0 items-center bg-[#f0f0f0] pl-[6px]">
        <svg viewBox="0 0 18 17" className="mr-2 h-[17px] w-[18px]">
          <path d="M1 1H17V12L12 16H1Z" fill="#fff" stroke="#444" />
          <path d="M3 11H10M3 13H8" stroke="#999" /><path d="M17 12L12 11V16" fill="#bbb" stroke="#444" />
          <text x="9" y="8" textAnchor="middle" fontSize="7" fontWeight="bold" fill="#e01010">DOC</text>
        </svg>
        <nav className="flex flex-1 text-[13px] leading-5 font-bold">
          {menus.map((m) => (
            <button key={m.key} className={clsx('text-left whitespace-nowrap', m.width)}><u>{m.key}</u>{m.label}</button>
          ))}
        </nav>
        <div className="flex gap-[2px] text-[#566]">
          <button aria-label="Minimize document" className="flex h-[18px] w-[19px] items-end justify-center border border-[#b4bcc6] bg-[#dfebf8] pb-[4px]"><span className="h-[2px] w-[6px] bg-[#566]" /></button>
          <button aria-label="Restore document" className="flex h-[18px] w-[18px] items-center justify-center border border-[#b4bcc6] bg-[#dfebf8]">
            <svg viewBox="0 0 8 8" className="size-2"><path d="M.5 3.500H5.500V7.500H.5ZM2.500 3V.5H7.500V5.500H6" fill="none" stroke="#566" /></svg>
          </button>
          <button aria-label="Close document" className="flex h-[18px] w-[17px] items-center justify-center border border-r-0 border-[#b4bcc6] bg-[#dfebf8]">
            <svg viewBox="0 0 8 8" className="size-[6px]"><path d="M0 0L8 8M8 0L0 8" stroke="#566" strokeWidth="2" /></svg>
          </button>
        </div>
      </div>

      <div className="flex min-h-0 flex-1">
        <div className="w-1 shrink-0 border-r border-[#9a9fa5] bg-[#e6eaee]" />
        <main className="flex min-w-0 flex-1 flex-col">
          <Toolbar />

          <div className="flex h-[156px] shrink-0 flex-col border-t border-[#6e6e6e]">
            <div className="flex h-[133px]">
              <div className="relative flex-1 overflow-hidden">
                <div className="flex w-[1088px] justify-between pt-[2px] pl-[1px]">
                  {fieldWindows.map((win) => <TableWindow key={win.title} win={win} />)}
                </div>
                <RelationLines />
              </div>
              <VScroll thumb="h-[17px]" />
            </div>
            <div className="flex border-t border-white pr-4"><HScroll thumb="w-[93%]" /></div>
          </div>

          <div className="flex h-5 shrink-0 border-y border-[#6e6e6e]">
            <div className="w-[126px] shrink-0 border-r-2 border-[#808080] bg-white" />
            <div className="flex w-[19px] shrink-0 items-center justify-center border-r-2 border-[#808080] bg-[#c4c4c4]">
              <svg viewBox="0 0 16 16" className="size-4">
                <path d="M1 5L4 4L6 6L12 6L9 9L7 9L6 12L3 14H1Z" fill="#0be00b" stroke="#075" strokeWidth=".7" />
                <path d="M6 3L8 1H15V6L13 5L10 6L7 5Z" fill="#827a10" stroke="#333" strokeWidth=".6" />
              </svg>
            </div>
            <div className="flex-1 bg-[#ffe0b9]"><Ruler /></div>
          </div>

          <div className="flex min-h-0 flex-1">
            <div className="relative w-[124px] shrink-0 overflow-hidden bg-[#ffe0b9] font-['DejaVu_Sans_Mono',monospace] text-[10px] leading-[17px]">
              {sections.map((s, i) => (
                <div key={i} className={clsx('border-b border-[#4a4034]', s.className?.includes('pl') ? s.className : clsx('pl-[10px]', s.className))} style={{ height: s.h }}>{s.name}</div>
              ))}
              <svg className="absolute inset-0 h-full w-full" fill="none" stroke="#222">
                <path d="M14 474.500H10.500V576.500H14M34 515.500H30.500V556.500H34" />
              </svg>
            </div>
            <div className="w-[3px] shrink-0 border-x border-[#808080] bg-white" />
            <SectionRuler />
            <div className="flex min-w-0 flex-1 flex-col border-l border-[#808080]">
              <ReportCanvas />
              <div className="flex h-[18px] items-center"><HScroll thumb="w-[47%]" /></div>
            </div>
            <VScroll thumb="h-[103px]" className="pb-[18px]" />
          </div>
        </main>
        <SideTabs />
      </div>

      <StatusBar />
      <Taskbar />

      {/* numbered call-outs */}
      <div className="pointer-events-none font-['Liberation_Sans',sans-serif] text-[67px] leading-none">
        <div className="absolute top-16 left-1 h-[132px] w-[1153px] border-4 border-[#ed1c24]" />
        <div className="absolute top-[42px] left-[9px] h-7 w-[712px] border-4 border-[#fff200]" />
        <div className="absolute top-[46px] left-[1564px] h-[297px] w-[60px] border-4 border-[#3f48cc]" />
        <div className="absolute top-[243px] left-[6px] h-[591px] w-[121px] border-4 border-[#880015]" />
        <div className="absolute top-[242px] left-[146px] h-[589px] w-[787px] border-4 border-[#22b14c]" />
        <span className="absolute top-[73px] left-[1169px] text-[#ed1c24]">1</span>
        <span className="absolute top-[263px] left-[1463px] text-[#3f48cc]">2</span>
        <span className="absolute top-[379px] left-[953px] text-[#22b14c]">3</span>
        <span className="absolute top-[305px] left-[51px] text-[#880015]">4</span>
        <span className="absolute top-[11px] left-[740px] text-[#fff200]">5</span>
      </div>
    </div>
  );
}
